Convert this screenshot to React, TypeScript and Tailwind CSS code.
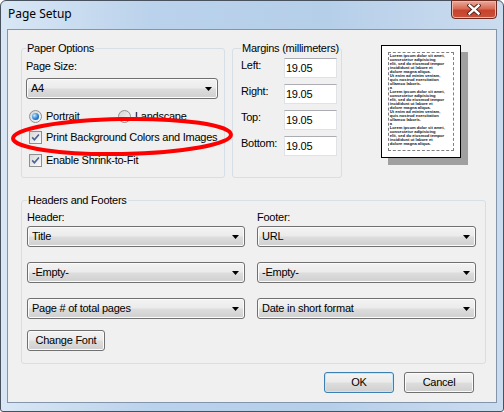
import React from 'react'

const gloss = "bg-[linear-gradient(#f3f3f3,#ebebeb_48%,#dddddd_52%,#cfcfcf)]"

function Arrow() {
  return (
    <svg width="7" height="4" viewBox="0 0 7 4" className="shrink-0">
      <path d="M0 0h7L3.5 4z" fill="#000" />
    </svg>
  )
}

function Combo({ value, className = '' }: { value: string; className?: string }) {
  return (
    <div className={`h-[21px] flex items-center justify-between pl-[4px] pr-[5px] border border-[#707070] rounded-[3px] shadow-[inset_0_0_0_1px_#fbfbfb] ${gloss} ${className}`}>
      <span>{value}</span>
      <Arrow />
    </div>
  )
}

function Radio({ checked }: { checked?: boolean }) {
  return (
    <span className="w-[13px] h-[13px] rounded-full border border-[#8e8f8f] bg-[linear-gradient(135deg,#d4d4d4,#f8f8f8)] flex items-center justify-center shrink-0">
      {checked && <span className="w-[7px] h-[7px] rounded-full bg-[radial-gradient(circle_at_35%_35%,#c2e8ff,#2a80d2_55%,#0d4886)]" />}
    </span>
  )
}

function Check() {
  return (
    <span className="w-[13px] h-[13px] border border-[#8e8f8f] bg-[linear-gradient(135deg,#d8d8d8,#fbfbfb)] flex items-center justify-center shrink-0">
      <svg width="9" height="9" viewBox="0 0 9 9">
        <path d="M1.2 4.4l2.2 2.4L7.9 1.4" stroke="#4d5f93" strokeWidth="1.6" fill="none" />
      </svg>
    </span>
  )
}

function Num() {
  return (
    <div className="w-[53px] h-[20px] bg-white border border-[#dfe3e8] border-t-[#abadb3] flex items-center pl-[1px]">
      19.05
    </div>
  )
}

function Btn({ label, main, className = '' }: { label: string; main?: boolean; className?: string }) {
  const edge = main
    ? 'border-[#3c7fb1] shadow-[inset_0_0_0_1px_#c4e6f8]'
    : 'border-[#707070] shadow-[inset_0_0_0_1px_#fbfbfb]'
  return (
    <div className={`h-[21px] flex items-center justify-center border rounded-[3px] ${edge} ${gloss} ${className}`}>
      {label}
    </div>
  )
}

const block = [
  'Lorem ipsum dolor sit amet,',
  'consectetur adipisicing',
  'elit, sed do eiusmod tempor',
  'incididunt ut labore et',
  'dolore magna aliqua.',
  'Ut enim ad minim veniam,',
  'quis nostrud exercitation',
  'ullamco laboris.',
  'a',
]
const previewLines = [...block, ...block, ...block.slice(0, 5)]

function Preview() {
  return (
    <div className="mt-[3px] w-[80px] h-[113px] bg-white border border-black shadow-[7px_7px_0_#a0a0a0] p-[6px]">
      <div className="h-full border border-dashed border-[#808080] pl-[1px] pt-[1px] overflow-hidden">
        {previewLines.map((l, i) => (
          <div key={i} className="text-[4.1px] leading-[4px] font-bold text-[#0b1322] whitespace-nowrap tracking-normal">
            {l}
          </div>
        ))}
      </div>
    </div>
  )
}

function CloseButton() {
  return (
    <div className="w-[46px] h-[19px] -mt-[1px] rounded-b-[4px] border border-[#6e2a1f] bg-[linear-gradient(#e9ab9b,#d86a55_45%,#c7432b_55%,#c9513a)] shadow-[inset_0_0_0_1px_#f0b6a6] flex items-center justify-center">
      <svg width="14" height="11" viewBox="0 0 14 11">
        <path d="M2.5 1.5l9 8M11.5 1.5l-9 8" stroke="#4a1a12" strokeWidth="4.2" strokeLinecap="square" />
        <path d="M2.5 1.5l9 8M11.5 1.5l-9 8" stroke="#fff" strokeWidth="2.4" strokeLinecap="square" />
      </svg>
    </div>
  )
}

export default function App() {
  return (
    <div className="w-[504px] h-[412px] relative font-['Liberation_Sans',Arial,sans-serif] text-[11px] tracking-[-0.25px] text-black">
      <div className="h-full flex flex-col border border-[#48525e] rounded-t-[6px] rounded-b-[3px] px-[6px] pb-[8px] bg-[linear-gradient(90deg,#d9e7f5,#bad2eb_30%,#b6cfe9_65%,#cbdcef)]">
        <div className="h-[28px] flex items-start justify-between">
          <span className="mt-[5px] ml-[1px] font-['Noto_Sans',sans-serif] text-[12px] leading-[16px] tracking-normal">Page Setup</span>
          <CloseButton />
        </div>

        <div className="flex-1 border border-[#8395ab] bg-[#f0f0f0] flex flex-col">
          <div className="flex pl-[13px] pt-[12px]">
            <fieldset className="w-[204px] h-[136px] border border-[#d5dfe5] rounded-[3px] pl-[4px] pr-[6px] flex flex-col">
              <legend className="px-[1px] leading-[13px] whitespace-nowrap">Paper Options</legend>
              <div className="mt-[5px] leading-[13px]">Page Size:</div>
              <Combo value="A4" className="mt-[5px]" />
              <div className="mt-[11px] flex items-center h-[13px] pl-[3px]">
                <div className="w-[89px] flex items-center gap-[4px]">
                  <Radio checked />
                  <span>Portrait</span>
                </div>
                <div className="flex items-center gap-[4px]">
                  <Radio />
                  <span>Landscape</span>
                </div>
              </div>
              <div className="mt-[8px] flex items-center h-[13px] pl-[3px] gap-[4px]">
                <Check />
                <span>Print Background Colors and Images</span>
              </div>
              <div className="mt-[10px] flex items-center h-[13px] pl-[3px] gap-[4px]">
                <Check />
                <span>Enable Shrink-to-Fit</span>
              </div>
            </fieldset>

            <fieldset className="ml-[7px] w-[107px] h-[136px] border border-[#d5dfe5] rounded-[3px] pl-[8px] pr-[1px] flex flex-col">
              <legend className="px-[1px] leading-[13px] whitespace-nowrap">Margins (millimeters)</legend>
              <div className="mt-[3px] flex flex-col gap-[6px]">
                {['Left:', 'Right:', 'Top:', 'Bottom:'].map((m) => (
                  <div key={m} className="flex items-start">
                    <span className="w-[43px] leading-[13px] pt-[1px]">{m}</span>
                    <Num />
                  </div>
                ))}
              </div>
            </fieldset>

            <div className="ml-[39px]">
              <Preview />
            </div>
          </div>

          <fieldset className="ml-[13px] mt-[16px] w-[465px] h-[170px] border border-[#d5dfe5] rounded-[3px] pl-[5px] pr-[9px]">
            <legend className="px-[1px] leading-[13px] whitespace-nowrap">Headers and Footers</legend>
            <div className="mt-[4px] grid grid-cols-[218px_219px] gap-x-[12px]">
              <div className="flex flex-col">
                <span className="leading-[13px]">Header:</span>
                <Combo value="Title" className="mt-[2px]" />
                <Combo value="-Empty-" className="mt-[15px]" />
                <Combo value="Page # of total pages" className="mt-[15px]" />
              </div>
              <div className="flex flex-col">
                <span className="leading-[13px]">Footer:</span>
                <Combo value="URL" className="mt-[2px]" />
                <Combo value="-Empty-" className="mt-[15px]" />
                <Combo value="Date in short format" className="mt-[15px]" />
              </div>
            </div>
            <Btn label="Change Font" className="mt-[11px] w-[78px]" />
          </fieldset>

          <div className="mt-[8px] mr-[22px] flex justify-end gap-[10px]">
            <Btn label="OK" main className="w-[70px]" />
            <Btn label="Cancel" className="w-[70px]" />
          </div>
        </div>
      </div>

      <svg className="absolute left-0 top-0 pointer-events-none" width="504" height="412" viewBox="0 0 504 412">
        <ellipse cx="122" cy="136.5" rx="109" ry="17.5" fill="none" stroke="#f00" strokeWidth="4" transform="rotate(-1 122 136.5)" />
      </svg>
    </div>
  )
}
